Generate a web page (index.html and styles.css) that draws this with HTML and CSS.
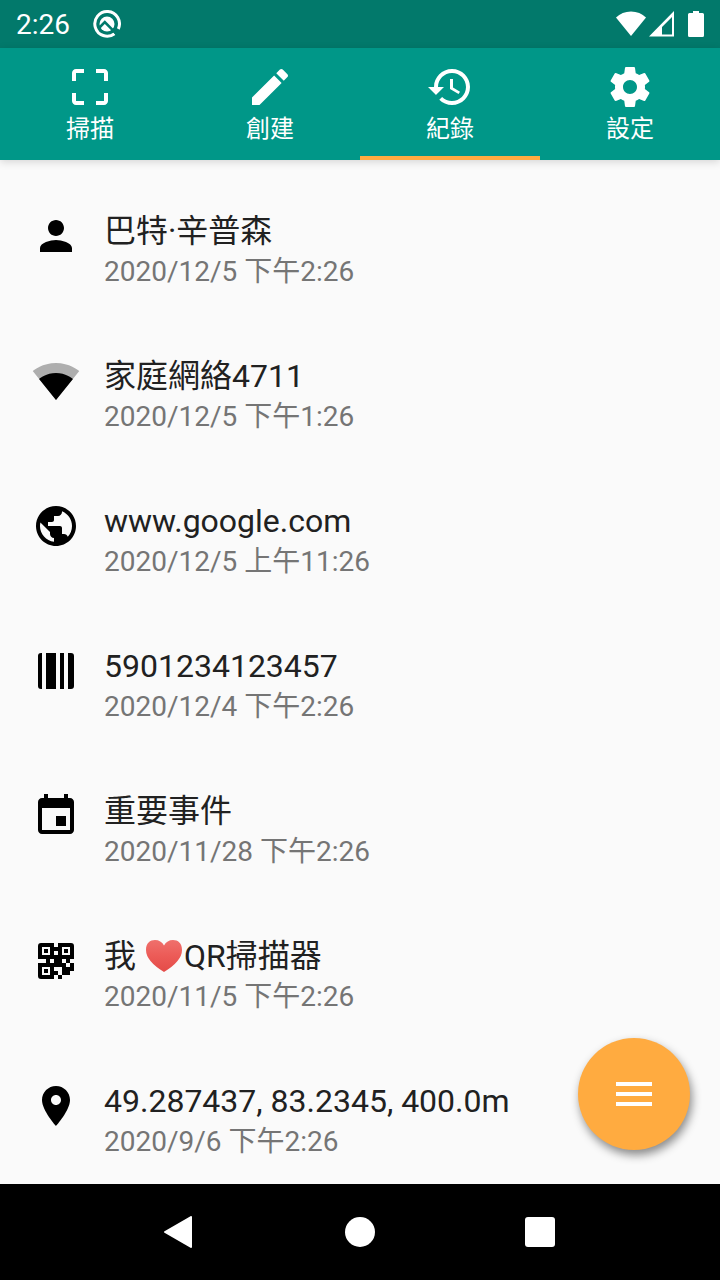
FILE: index.html
```html
<!DOCTYPE html>
<html lang="zh-Hant">
<head>
<meta charset="utf-8">
<meta name="viewport" content="width=device-width, initial-scale=1">
<title>紀錄</title>
<link rel="stylesheet" href="styles.css">
</head>
<body>
<div class="screen">
  <div class="status-bar">
    <time class="clock">2:26</time>
    <svg class="status-note" viewBox="0 0 28 28" aria-hidden="true">
      <path d="M21.500 23.700A12.300 12.300 0 1 1 25.300 19" fill="none" stroke="#fff" stroke-width="3"/>
      <circle cx="14" cy="14" r="7.500" fill="#fff"/>
      <path d="M5.500 18.500L11.800 12.200L25 25.400" fill="none" stroke="#02796b" stroke-width="2.600"/>
    </svg>
    <div class="status-icons">
      <svg class="status-wifi" viewBox="0 0 30 26" aria-hidden="true"><path d="M0 6.500Q6 .5 15 .5T30 6.500L15 25Z" fill="#fff"/></svg>
      <svg class="status-signal" viewBox="0 0 26 26" aria-hidden="true"><path fill-rule="evenodd" d="M0 25.500L25 0V25.500ZM13 23.500H23V6L13 16Z" fill="#fff"/></svg>
      <svg class="status-battery" viewBox="0 0 16 26" aria-hidden="true"><path d="M5 0H11V2H14.500Q16 2 16 3.500V24.500Q16 26 14.500 26H1.500Q0 26 0 24.500V3.500Q0 2 1.500 2H5Z" fill="#fff"/></svg>
    </div>
  </div>

  <nav class="tabs">
    <button class="tab" type="button">
      <svg class="icon" viewBox="0 0 24 24" aria-hidden="true"><path d="M3 5v4h2V5h4V3H5c-1.100 0-2 .9-2 2zm2 10H3v4c0 1.100.9 2 2 2h4v-2H5v-4zm14 4h-4v2h4c1.100 0 2-.9 2-2v-4h-2v4zm0-16h-4v2h4v4h2V5c0-1.100-.9-2-2-2z"/></svg>
      <span>掃描</span>
    </button>
    <button class="tab" type="button">
      <svg class="icon" viewBox="0 0 24 24" aria-hidden="true"><path d="M3 17.250V21h3.750L17.810 9.940l-3.750-3.750L3 17.250zM20.710 7.040c.39-.39.39-1.020 0-1.410l-2.340-2.340c-.39-.39-1.020-.39-1.410 0l-1.830 1.830 3.750 3.750 1.830-1.830z"/></svg>
      <span>創建</span>
    </button>
    <button class="tab tab-active" type="button" aria-current="page">
      <svg class="icon" viewBox="0 0 24 24" aria-hidden="true"><path d="M13 3c-4.970 0-9 4.030-9 9H1l3.890 3.890.07.14L9 12H6c0-3.870 3.130-7 7-7s7 3.130 7 7-3.130 7-7 7c-1.930 0-3.680-.79-4.940-2.060l-1.420 1.420C8.270 19.990 10.510 21 13 21c4.970 0 9-4.030 9-9s-4.030-9-9-9zm-1 5v5l4.280 2.540.72-1.210-3.500-2.080V8H12z"/></svg>
      <span>紀錄</span>
    </button>
    <button class="tab" type="button">
      <svg class="icon" viewBox="0 0 24 24" aria-hidden="true"><path d="M19.430 12.980c.04-.32.07-.64.07-.98s-.03-.66-.07-.98l2.110-1.650c.19-.15.24-.42.12-.64l-2-3.460c-.12-.22-.39-.3-.61-.22l-2.490 1c-.52-.4-1.080-.73-1.690-.98l-.38-2.650C14.460 2.180 14.250 2 14 2h-4c-.25 0-.46.18-.49.42l-.38 2.650c-.61.25-1.170.59-1.690.98l-2.490-1c-.23-.09-.49 0-.61.22l-2 3.460c-.13.22-.07.49.12.64l2.110 1.650c-.04.32-.07.65-.07.98s.03.66.07.98l-2.110 1.650c-.19.15-.24.42-.12.64l2 3.460c.12.22.39.3.61.22l2.490-1c.52.4 1.080.73 1.690.98l.38 2.650c.03.24.24.42.49.42h4c.25 0 .46-.18.49-.42l.38-2.650c.61-.25 1.170-.59 1.690-.98l2.490 1c.23.09.49 0 .61-.22l2-3.460c.12-.22.07-.49-.12-.64l-2.110-1.650zM12 15.500c-1.930 0-3.500-1.570-3.500-3.500s1.570-3.500 3.500-3.500 3.500 1.570 3.500 3.500-1.570 3.500-3.500 3.500z"/></svg>
      <span>設定</span>
    </button>
  </nav>

  <main class="content">
    <ul class="history">
      <li class="entry">
        <svg class="icon" viewBox="0 0 24 24" aria-hidden="true"><path d="M12 12c2.210 0 4-1.790 4-4s-1.790-4-4-4-4 1.790-4 4 1.790 4 4 4zm0 2c-2.670 0-8 1.340-8 4v2h16v-2c0-2.660-5.330-4-8-4z"/></svg>
        <div class="entry-text"><div class="name">巴特·辛普森</div><div class="date">2020/12/5 下午2:26</div></div>
      </li>
      <li class="entry">
        <svg class="icon" viewBox="0 0 24 24" aria-hidden="true"><path fill-opacity=".3" d="M12.010 21.490L23.640 7c-.45-.34-4.930-4-11.640-4C5.280 3 .81 6.660.36 7l11.630 14.490.01.01.01-.01z"/><path d="M3.530 10.950l8.460 10.540.01.01.01-.01 8.460-10.540C20.040 10.620 16.810 8 12 8c-4.810 0-8.040 2.620-8.470 2.950z"/></svg>
        <div class="entry-text"><div class="name">家庭網絡4711</div><div class="date">2020/12/5 下午1:26</div></div>
      </li>
      <li class="entry">
        <svg class="icon" viewBox="0 0 24 24" aria-hidden="true"><path d="M12 2C6.480 2 2 6.480 2 12s4.480 10 10 10 10-4.480 10-10S17.520 2 12 2zm-1 17.930c-3.950-.49-7-3.850-7-7.930 0-.62.08-1.210.21-1.790L9 15v1c0 1.100.9 2 2 2v1.930zm6.900-2.540c-.26-.81-1-1.390-1.900-1.390h-1v-3c0-.55-.45-1-1-1H8v-2h2c.55 0 1-.45 1-1V7h2c1.100 0 2-.9 2-2v-.41c2.930 1.190 5 4.060 5 7.410 0 2.080-.8 3.970-2.100 5.390z"/></svg>
        <div class="entry-text"><div class="name">www.google.com</div><div class="date">2020/12/5 上午11:26</div></div>
      </li>
      <li class="entry">
        <svg class="icon" viewBox="0 0 24 24" aria-hidden="true"><path d="M5 3H4.500Q3 3 3 4.500V19.500Q3 21 4.500 21H5ZM7 3H12V21H7ZM14 3H16V21H14ZM18 3H19.500Q21 3 21 4.500V19.500Q21 21 19.500 21H18Z"/></svg>
        <div class="entry-text"><div class="name">5901234123457</div><div class="date">2020/12/4 下午2:26</div></div>
      </li>
      <li class="entry">
        <svg class="icon" viewBox="0 0 24 24" aria-hidden="true"><path d="M17 12h-5v5h5v-5zM16 1v2H8V1H6v2H5c-1.110 0-1.990.9-1.990 2L3 19c0 1.100.89 2 2 2h14c1.100 0 2-.9 2-2V5c0-1.100-.9-2-2-2h-1V1h-2zm3 18H5V8h14v11z"/></svg>
        <div class="entry-text"><div class="name">重要事件</div><div class="date">2020/11/28 下午2:26</div></div>
      </li>
      <li class="entry">
        <svg class="icon" viewBox="0 0 24 24" aria-hidden="true">
          <path fill-rule="evenodd" d="M4.500 3H11V11H3V4.500Q3 3 4.500 3ZM5 5V9H9V5ZM13 3H19.500Q21 3 21 4.500V11H13ZM15 5V9H19V5ZM3 13H11V21H4.500Q3 21 3 19.500ZM5 15V19H9V15Z"/>
          <path d="M6 6H8V8H6ZM16 6H18V8H16ZM6 16H8V18H6ZM11 5H13V7H11ZM7 11H9V13H7ZM11 9H13V11H15V13H17V15H19V13H21V17H19V19H15V15H11ZM17 11H19V13H17ZM11 17H13V19H11ZM13 19H15V21H13Z"/>
        </svg>
        <div class="entry-text"><div class="name">我 <svg class="heart" viewBox="0 0 40 34" role="img" aria-label="愛心"><defs><linearGradient id="heart-fill" x2="0" y2="1"><stop offset="0" stop-color="#ef706c"/><stop offset=".5" stop-color="#ec5b57"/><stop offset="1" stop-color="#e44b48"/></linearGradient></defs><path d="M20 33Q2 22 2 11C2 4 6 1 11 1Q17 1 20 6.500Q23 1 29 1C34 1 38 4 38 11Q38 22 20 33Z" fill="url(#heart-fill)"/></svg>QR掃描器</div><div class="date">2020/11/5 下午2:26</div></div>
      </li>
      <li class="entry">
        <svg class="icon" viewBox="0 0 24 24" aria-hidden="true"><path d="M12 2C8.130 2 5 5.130 5 9c0 5.250 7 13 7 13s7-7.750 7-13c0-3.870-3.130-7-7-7zm0 9.500c-1.380 0-2.500-1.120-2.500-2.500s1.120-2.500 2.500-2.500 2.500 1.120 2.500 2.500-1.120 2.500-2.500 2.500z"/></svg>
        <div class="entry-text"><div class="name">49.287437, 83.2345, 400.0m</div><div class="date">2020/9/6 下午2:26</div></div>
      </li>
    </ul>
    <button class="fab" type="button" aria-label="選單">
      <svg class="icon" viewBox="0 0 24 24" aria-hidden="true"><path d="M3 18h18v-2H3v2zm0-5h18v-2H3v2zm0-7v2h18V6H3z"/></svg>
    </button>
  </main>

  <nav class="system-nav">
    <button class="system-button" type="button" aria-label="返回"><svg viewBox="0 0 32 32" aria-hidden="true"><path d="M27 1V31L1 16Z" stroke="#fff" stroke-width="2" stroke-linejoin="round"/></svg></button>
    <button class="system-button" type="button" aria-label="主畫面"><svg viewBox="0 0 32 32" aria-hidden="true"><circle cx="16" cy="16" r="15"/></svg></button>
    <button class="system-button" type="button" aria-label="最近使用"><svg viewBox="0 0 32 32" aria-hidden="true"><rect x="1" y="1" width="30" height="30" rx="3"/></svg></button>
  </nav>
</div>
</body>
</html>
```
FILE: styles.css
```css
* {
  box-sizing: border-box;
}

body {
  margin: 0;
  background: #fafafa;
  color: #212121;
  font-family: Roboto, "Noto Sans CJK TC", sans-serif;
}

button {
  margin: 0;
  padding: 0;
  border: 0;
  background: none;
  color: inherit;
  font: inherit;
}

.screen {
  display: flex;
  flex-direction: column;
  height: 100vh;
}

.icon {
  display: block;
  flex: none;
  width: 48px;
  height: 48px;
  fill: currentColor;
}

.status-bar {
  display: flex;
  align-items: center;
  height: 48px;
  padding: 0 16px;
  background: #02796b;
  color: #fff;
}

.clock {
  font-size: 28px;
  line-height: 48px;
  padding-top: 2px;
}

.status-note {
  width: 28px;
  height: 28px;
  margin-left: 23px;
}

.status-icons {
  display: flex;
  align-items: center;
  margin-left: auto;
}

.status-wifi {
  width: 30px;
  height: 26px;
}

.status-signal {
  width: 26px;
  height: 26px;
  margin: 0 13px 0 3px;
}

.status-battery {
  width: 16px;
  height: 26px;
}

.tabs {
  position: relative;
  z-index: 1;
  display: grid;
  grid-template-columns: repeat(4, 1fr);
  height: 112px;
  background: #009788;
  color: #fff;
  box-shadow: 0 2px 8px rgba(0, 0, 0, 0.15);
}

.tab {
  display: flex;
  flex-direction: column;
  align-items: center;
  padding-top: 15px;
  border-bottom: 4px solid transparent;
  font-size: 24px;
  line-height: 36px;
}

.tab-active {
  border-bottom-color: #ffab40;
}

.content {
  position: relative;
  flex: 1;
  min-height: 0;
}

.history {
  height: 100%;
  margin: 0;
  padding: 16px 0 0;
  overflow: hidden;
  list-style: none;
}

.entry {
  display: flex;
  gap: 24px;
  height: 145px;
  padding: 36px 32px 0;
}

.entry .icon {
  color: #000;
}

.name {
  font-size: 32px;
  line-height: 38px;
  white-space: nowrap;
}

.date {
  color: #757575;
  font-size: 28px;
  line-height: 44px;
  white-space: nowrap;
}

.heart {
  width: 40px;
  height: 34px;
  vertical-align: -6px;
}

.fab {
  position: absolute;
  right: 30px;
  bottom: 34px;
  display: grid;
  place-items: center;
  width: 112px;
  height: 112px;
  border-radius: 50%;
  background: #ffab40;
  color: #fff;
  box-shadow: 2px 5px 10px rgba(0, 0, 0, 0.45);
}

.system-nav {
  display: flex;
  justify-content: center;
  align-items: center;
  gap: 148px;
  height: 96px;
  background: #000;
}

.system-button svg {
  display: block;
  width: 32px;
  height: 32px;
  fill: #fff;
}
```
